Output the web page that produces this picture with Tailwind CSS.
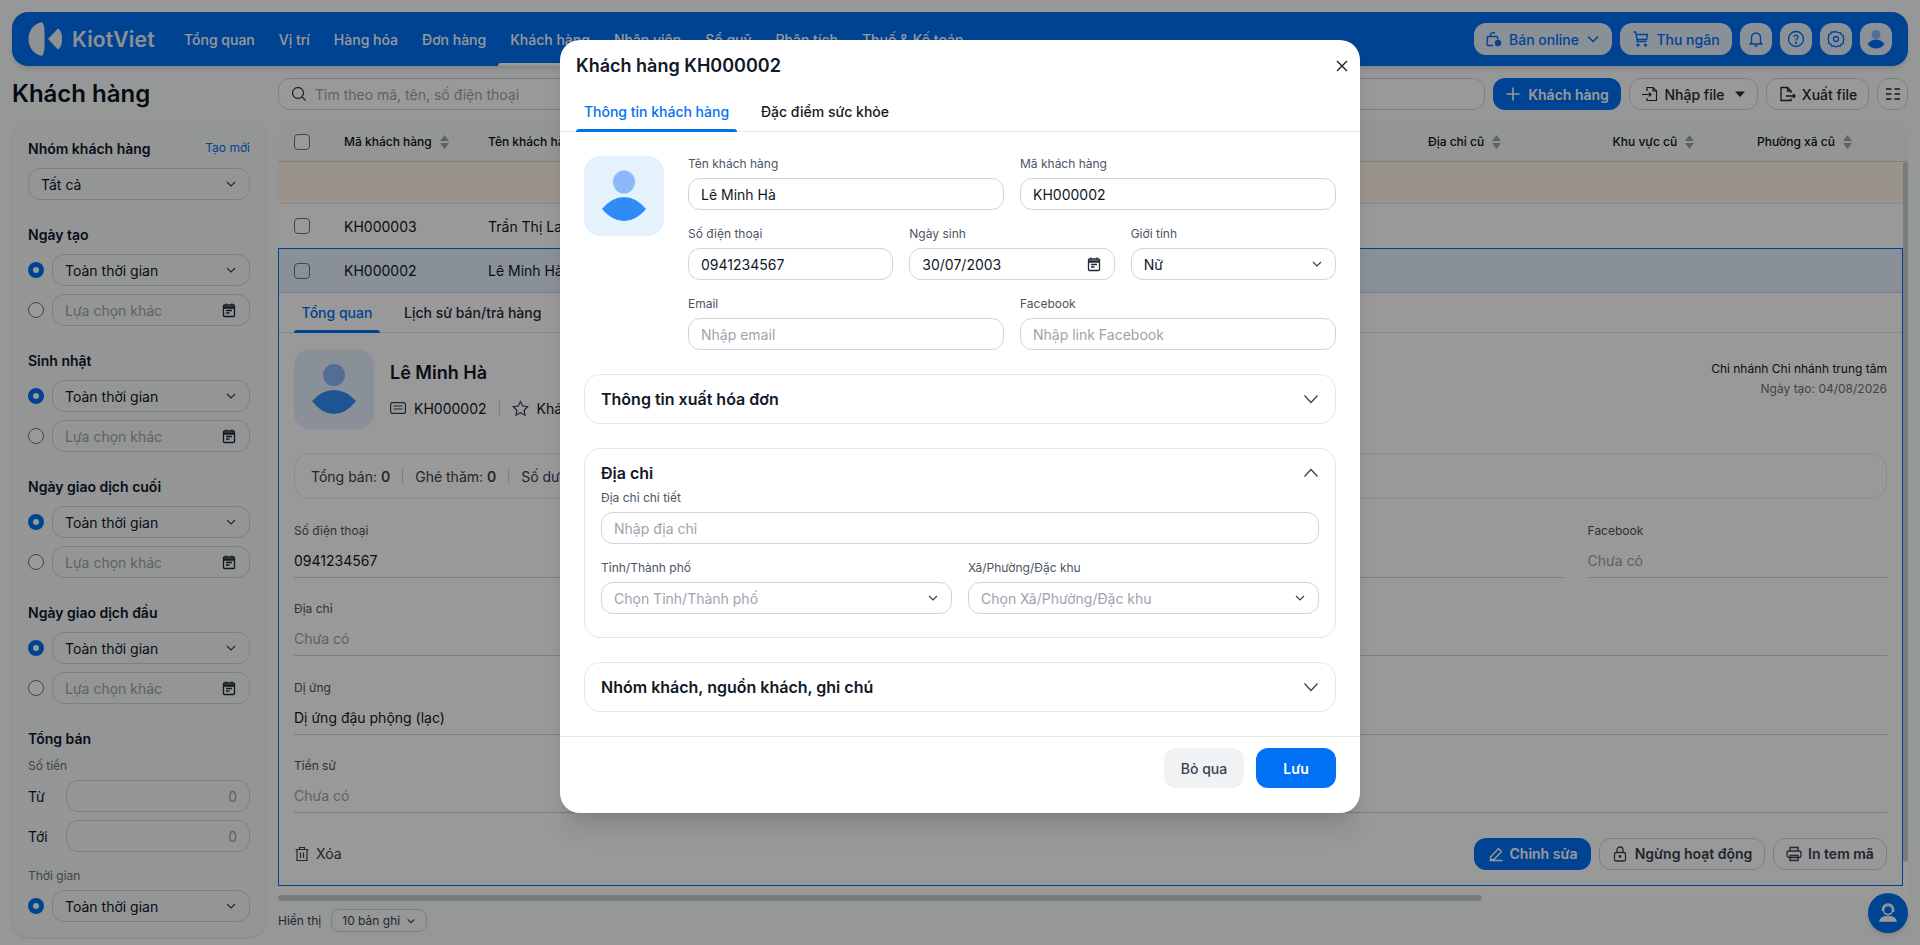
<!DOCTYPE html>
<html lang="vi">
<head>
<meta charset="utf-8">
<script src="https://cdn.jsdelivr.net/npm/@tailwindcss/browser@4"></script>
<title>Khách hàng</title>
</head>
<body class="relative w-[1920px] h-[945px] overflow-hidden bg-[#fbfdfd] font-['Inter','Noto_Sans',sans-serif] text-[14px] text-[#0f172a]">
<div class="px-3 pt-3">
  <!-- Top navigation -->
  <header class="h-[54px] rounded-2xl bg-[#0070f4] flex items-center pl-4 pr-4 shadow-md">
    <div class="flex items-center w-[144px] shrink-0">
      <svg width="36" height="34" viewBox="0 0 36 34" fill="#eef1f4"><path d="M14 0 C5 2 0.5 9 0.5 17 C0.5 25 5 32 14 34 C17 30 16.500 24 16.500 17 C16.500 10 17 4 14 0Z"/><path d="M20 17 L30 6.500 C33.500 9 34 13 34 17 C34 21 33.500 25 30 27.500Z"/></svg>
      <span class="ml-2 text-[21px] leading-none font-semibold text-[#eef1f4] font-['Inter',sans-serif] tracking-[0.2px]">KiotViet</span>
    </div>
    <nav class="flex h-full font-medium text-white">
      <a class="px-3 flex items-center">Tổng quan</a>
      <a class="px-3 flex items-center">Vị trí</a>
      <a class="px-3 flex items-center">Hàng hóa</a>
      <a class="px-3 flex items-center">Đơn hàng</a>
      <a class="px-3 flex items-center relative">Khách hàng<span class="absolute left-0 right-0 bottom-0 h-[3px] rounded-t bg-white"></span></a>
      <a class="px-3 flex items-center">Nhân viên</a>
      <a class="px-3 flex items-center">Sổ quỹ</a>
      <a class="px-3 flex items-center">Phân tích</a>
      <a class="px-3 flex items-center">Thuế &amp; Kế toán</a>
    </nav>
    <div class="ml-auto flex gap-2 text-[#0070f4] font-medium">
      <button class="h-8 w-[138px] rounded-xl bg-[#e6f1fe] flex items-center justify-center gap-[6px]">
        <svg width="18" height="18" viewBox="0 0 18 18" fill="none" stroke="currentColor" stroke-width="1.400"><path d="M8 15.500H3.500a1.500 1.500 0 0 1-1.500-1.600L2.600 6.500h9.800l.4 3"/><path d="M5.500 6.500V5a2.500 2.500 0 0 1 4.500-1.500"/><circle cx="13" cy="13" r="3.200" fill="currentColor" stroke="none"/></svg>
        Bán online
        <svg width="16" height="16" viewBox="0 0 16 16" fill="none" stroke="currentColor" stroke-width="1.500"><path d="M3 5.500l5 5 5-5"/></svg>
      </button>
      <button class="h-8 w-[112px] rounded-xl bg-[#e6f1fe] flex items-center justify-center gap-[6px]">
        <svg width="18" height="18" viewBox="0 0 18 18" fill="none" stroke="currentColor" stroke-width="1.400"><path d="M1.500 2h2.200l1.600 9.500h9"/><path d="M4 4.500h11.500l-1 5H5"/><circle cx="6" cy="15" r="0.900" fill="currentColor"/><circle cx="13.500" cy="15" r="0.900" fill="currentColor"/></svg>
        Thu ngân
      </button>
      <button class="size-8 rounded-xl bg-[#e6f1fe] flex items-center justify-center">
        <svg width="18" height="18" viewBox="0 0 18 18" fill="none" stroke="currentColor" stroke-width="1.400"><path d="M4.500 12.500V7.500a4.500 4.500 0 0 1 9 0v5l1.200 1.500H3.300z"/><path d="M7.500 16h3"/></svg>
      </button>
      <button class="size-8 rounded-xl bg-[#e6f1fe] flex items-center justify-center">
        <svg width="18" height="18" viewBox="0 0 18 18" fill="none" stroke="currentColor" stroke-width="1.300"><circle cx="9" cy="9" r="7.500"/><path d="M7 7a2 2 0 1 1 3 1.800c-.7.400-1 .8-1 1.700"/><circle cx="9" cy="12.800" r=".5" fill="currentColor"/></svg>
      </button>
      <button class="size-8 rounded-xl bg-[#e6f1fe] flex items-center justify-center">
        <svg width="18" height="18" viewBox="0 0 18 18" fill="none" stroke="currentColor" stroke-width="1.300"><path d="M9 1.500l2 1.200 2.300-.1 1.100 2 2 1.100-.1 2.300L17 9l-.7 1.700.1 2.300-2 1.100-1.100 2-2.300-.1L9 17l-2-1-2.300.1-1.100-2-2-1.100.1-2.300L1 9l.7-1.700-.1-2.300 2-1.100 1.100-2 2.300.1z"/><circle cx="9" cy="9" r="2.500"/></svg>
      </button>
      <button class="size-8 rounded-xl bg-[#e6f1fe] flex items-center justify-center">
        <svg width="24" height="24" viewBox="0 0 24 24"><circle cx="12" cy="7.500" r="4.500" fill="#8ab8fb"/><path d="M3.500 17 Q7 12.500 12 12.500 Q17 12.500 20.500 17 Q17 21.500 12 21.500 Q7 21.500 3.500 17Z" fill="#0070f4"/></svg>
      </button>
    </div>
  </header>

  <div class="mt-3 flex h-[854px]">
    <!-- Left column -->
    <div class="w-[254px] shrink-0 flex flex-col">
      <h1 class="h-8 mb-3 text-[24px] leading-8 font-semibold text-[#0b1220]">Khách hàng</h1>
      <aside class="flex-1 rounded-2xl bg-[#f7f8f9] px-4 pt-4 pb-[15px] shadow-sm">
        <div class="h-full overflow-hidden flex flex-col">
          <div class="h-5 flex items-center justify-between font-semibold"><span>Nhóm khách hàng</span><a class="text-[12px] font-normal text-[#0070f4]">Tạo mới</a></div>
          <div class="mt-[10px] h-8 rounded-xl border border-[#d1d5db] bg-[#f7f8f9] pl-3 pr-3 flex items-center justify-between">Tất cả<svg width="12" height="12" viewBox="0 0 12 12" fill="none" stroke="#374151" stroke-width="1.200"><path d="M2 4l4 4 4-4"/></svg></div>

          <div class="mt-6 h-5 flex items-center font-semibold">Ngày tạo</div>
          <div class="mt-[10px] flex items-center gap-2"><span class="size-4 shrink-0 rounded-full border-[5px] border-[#0070f4] bg-white"></span><div class="flex-1 h-8 rounded-xl border border-[#d1d5db] pl-3 pr-3 flex items-center justify-between">Toàn thời gian<svg width="12" height="12" viewBox="0 0 12 12" fill="none" stroke="#374151" stroke-width="1.200"><path d="M2 4l4 4 4-4"/></svg></div></div>
          <div class="mt-2 flex items-center gap-2"><span class="size-4 shrink-0 rounded-full border border-[#6b7280] bg-white"></span><div class="flex-1 h-8 rounded-xl border border-[#d1d5db] pl-3 pr-3 flex items-center justify-between text-[#9ca3af]">Lựa chọn khác<svg width="16" height="16" viewBox="0 0 16 16" fill="none" stroke="#1f2937" stroke-width="1.300"><rect x="2.500" y="3" width="11" height="11.500" rx="1"/><path d="M2.500 5.500h11" stroke-width="2.500"/><path d="M5 1.500v2M11 1.500v2M5 8.500h6M5 11h3.500"/></svg></div></div>

          <div class="mt-6 h-5 flex items-center font-semibold">Sinh nhật</div>
          <div class="mt-[10px] flex items-center gap-2"><span class="size-4 shrink-0 rounded-full border-[5px] border-[#0070f4] bg-white"></span><div class="flex-1 h-8 rounded-xl border border-[#d1d5db] pl-3 pr-3 flex items-center justify-between">Toàn thời gian<svg width="12" height="12" viewBox="0 0 12 12" fill="none" stroke="#374151" stroke-width="1.200"><path d="M2 4l4 4 4-4"/></svg></div></div>
          <div class="mt-2 flex items-center gap-2"><span class="size-4 shrink-0 rounded-full border border-[#6b7280] bg-white"></span><div class="flex-1 h-8 rounded-xl border border-[#d1d5db] pl-3 pr-3 flex items-center justify-between text-[#9ca3af]">Lựa chọn khác<svg width="16" height="16" viewBox="0 0 16 16" fill="none" stroke="#1f2937" stroke-width="1.300"><rect x="2.500" y="3" width="11" height="11.500" rx="1"/><path d="M2.500 5.500h11" stroke-width="2.500"/><path d="M5 1.500v2M11 1.500v2M5 8.500h6M5 11h3.500"/></svg></div></div>

          <div class="mt-6 h-5 flex items-center font-semibold">Ngày giao dịch cuối</div>
          <div class="mt-[10px] flex items-center gap-2"><span class="size-4 shrink-0 rounded-full border-[5px] border-[#0070f4] bg-white"></span><div class="flex-1 h-8 rounded-xl border border-[#d1d5db] pl-3 pr-3 flex items-center justify-between">Toàn thời gian<svg width="12" height="12" viewBox="0 0 12 12" fill="none" stroke="#374151" stroke-width="1.200"><path d="M2 4l4 4 4-4"/></svg></div></div>
          <div class="mt-2 flex items-center gap-2"><span class="size-4 shrink-0 rounded-full border border-[#6b7280] bg-white"></span><div class="flex-1 h-8 rounded-xl border border-[#d1d5db] pl-3 pr-3 flex items-center justify-between text-[#9ca3af]">Lựa chọn khác<svg width="16" height="16" viewBox="0 0 16 16" fill="none" stroke="#1f2937" stroke-width="1.300"><rect x="2.500" y="3" width="11" height="11.500" rx="1"/><path d="M2.500 5.500h11" stroke-width="2.500"/><path d="M5 1.500v2M11 1.500v2M5 8.500h6M5 11h3.500"/></svg></div></div>

          <div class="mt-6 h-5 flex items-center font-semibold">Ngày giao dịch đầu</div>
          <div class="mt-[10px] flex items-center gap-2"><span class="size-4 shrink-0 rounded-full border-[5px] border-[#0070f4] bg-white"></span><div class="flex-1 h-8 rounded-xl border border-[#d1d5db] pl-3 pr-3 flex items-center justify-between">Toàn thời gian<svg width="12" height="12" viewBox="0 0 12 12" fill="none" stroke="#374151" stroke-width="1.200"><path d="M2 4l4 4 4-4"/></svg></div></div>
          <div class="mt-2 flex items-center gap-2"><span class="size-4 shrink-0 rounded-full border border-[#6b7280] bg-white"></span><div class="flex-1 h-8 rounded-xl border border-[#d1d5db] pl-3 pr-3 flex items-center justify-between text-[#9ca3af]">Lựa chọn khác<svg width="16" height="16" viewBox="0 0 16 16" fill="none" stroke="#1f2937" stroke-width="1.300"><rect x="2.500" y="3" width="11" height="11.500" rx="1"/><path d="M2.500 5.500h11" stroke-width="2.500"/><path d="M5 1.500v2M11 1.500v2M5 8.500h6M5 11h3.500"/></svg></div></div>

          <div class="mt-6 h-5 shrink-0 flex items-center font-semibold">Tổng bán</div>
          <div class="mt-[10px] h-4 shrink-0 text-[12px] leading-4 text-[#6b7280]">Số tiền</div>
          <div class="mt-[6px] shrink-0 flex items-center"><span class="w-[38px]">Từ</span><div class="flex-1 h-8 rounded-xl border border-[#d1d5db] px-3 flex items-center justify-end text-[#9ca3af]">0</div></div>
          <div class="mt-2 shrink-0 flex items-center"><span class="w-[38px]">Tới</span><div class="flex-1 h-8 rounded-xl border border-[#d1d5db] px-3 flex items-center justify-end text-[#9ca3af]">0</div></div>
          <div class="mt-4 h-4 shrink-0 text-[12px] leading-4 text-[#6b7280]">Thời gian</div>
          <div class="mt-[6px] shrink-0 flex items-center gap-2"><span class="size-4 shrink-0 rounded-full border-[5px] border-[#0070f4] bg-white"></span><div class="flex-1 h-8 rounded-xl border border-[#d1d5db] pl-3 pr-3 flex items-center justify-between">Toàn thời gian<svg width="12" height="12" viewBox="0 0 12 12" fill="none" stroke="#374151" stroke-width="1.200"><path d="M2 4l4 4 4-4"/></svg></div></div>
        </div>
      </aside>
    </div>

    <!-- Main column -->
    <main class="ml-3 flex-1 min-w-0 flex flex-col">
      <div class="h-8 mb-3 flex gap-2">
        <div class="flex-1 rounded-xl border border-[#d1d5db] bg-white px-3 flex items-center gap-2 text-[#9ca3af]">
          <svg width="16" height="16" viewBox="0 0 16 16" fill="none" stroke="#374151" stroke-width="1.300"><circle cx="7" cy="7" r="5.500"/><path d="M11 11l3.500 3.500"/></svg>
          Tìm theo mã, tên, số điện thoại
        </div>
        <button class="w-[128px] rounded-xl bg-[#0070f4] text-white font-semibold flex items-center justify-center gap-[7px]"><svg width="16" height="16" viewBox="0 0 16 16" fill="none" stroke="currentColor" stroke-width="1.600"><path d="M8 1.500v13M1.500 8h13"/></svg>Khách hàng</button>
        <button class="w-[129px] rounded-xl border border-[#d1d5db] bg-white font-medium text-[#1f2937] flex items-center justify-center gap-[6px]"><svg width="18" height="18" viewBox="0 0 18 18" fill="none" stroke="currentColor" stroke-width="1.200"><path d="M6 6V2.500h6l3.500 3.500v9.500H6V13"/><path d="M12 2.500V6h3.500"/><path d="M1 9.500h9M8 7.500l2 2-2 2"/></svg>Nhập file<svg class="ml-1" width="12" height="12" viewBox="0 0 12 12" fill="currentColor"><path d="M1 3.500h10L6 9z"/></svg></button>
        <button class="w-[103px] rounded-xl border border-[#d1d5db] bg-white font-medium text-[#1f2937] flex items-center justify-center gap-[6px]"><svg width="18" height="18" viewBox="0 0 18 18" fill="none" stroke="currentColor" stroke-width="1.300"><path d="M13 8V6L9.500 2.500H3v13h10v-2"/><path d="M9.500 2.500V6H13"/><path d="M8 11h9M15 9l2 2-2 2"/></svg>Xuất file</button>
        <button class="w-[31px] rounded-xl border border-[#d1d5db] bg-white flex items-center justify-center"><svg width="16" height="16" viewBox="0 0 16 16" fill="none" stroke="#1f2937" stroke-width="1.500"><path d="M1 3h5.500M9.500 3H15M1 8h5.500M9.500 8H15M1 13h5.500M9.500 13H15"/></svg></button>
      </div>

      <section class="relative h-[779px] rounded-t-2xl overflow-hidden bg-white">
        <div class="h-10 bg-[#f7f8f9] border-b border-[#d1d5db] grid grid-cols-[66px_144px_940px_184.500px_144.500px_1fr] items-center text-[12px] font-medium text-[#0b1220]">
          <span class="pl-4"><span class="block size-4 rounded-[4px] border border-[#6b7280] bg-white"></span></span>
          <span class="flex items-center gap-2">Mã khách hàng<svg width="9" height="14" viewBox="0 0 9 14" fill="#9ca3af"><path d="M4.500 0L9 6H0zM0 8h9l-4.500 6z"/></svg></span>
          <span>Tên khách hàng</span>
          <span class="flex items-center gap-2">Địa chỉ cũ<svg width="9" height="14" viewBox="0 0 9 14" fill="#9ca3af"><path d="M4.500 0L9 6H0zM0 8h9l-4.500 6z"/></svg></span>
          <span class="flex items-center gap-2">Khu vực cũ<svg width="9" height="14" viewBox="0 0 9 14" fill="#9ca3af"><path d="M4.500 0L9 6H0zM0 8h9l-4.500 6z"/></svg></span>
          <span class="flex items-center gap-2">Phường xã cũ<svg width="9" height="14" viewBox="0 0 9 14" fill="#9ca3af"><path d="M4.500 0L9 6H0zM0 8h9l-4.500 6z"/></svg></span>
        </div>
        <div class="h-[42px] bg-[#fff6ea] border-b border-[#e5e7eb]"></div>
        <div class="h-11 flex items-center">
          <span class="pl-4 w-[66px]"><span class="block size-4 rounded-[4px] border border-[#6b7280] bg-white"></span></span>
          <span class="w-[144px]">KH000003</span><span>Trần Thị Lan</span>
        </div>
        <!-- Expanded row -->
        <div class="w-[1625px] h-[638px] border border-[#0070f4] flex flex-col">
          <div class="h-[44px] shrink-0 bg-[#e6f1fe] border-b border-[#d1d5db] flex items-center">
            <span class="pl-[15px] w-[65px]"><span class="block size-4 rounded-[4px] border border-[#6b7280] bg-white/0"></span></span>
            <span class="w-[144px]">KH000002</span><span>Lê Minh Hà</span>
          </div>
          <div class="h-10 shrink-0 mx-0 border-b border-[#e5e7eb] flex px-[15px]">
            <span class="relative w-[86px] flex items-center justify-center text-[#0070f4] font-medium">Tổng quan<span class="absolute left-0 right-0 -bottom-px h-[3px] rounded-t bg-[#0070f4]"></span></span>
            <span class="ml-6 flex items-center font-medium text-[#1f2937]">Lịch sử bán/trả hàng</span>
          </div>
          <div class="px-[15px] pt-4 flex flex-col flex-1">
            <div class="flex h-20">
              <div class="size-20 rounded-2xl bg-[#e6f1fe] flex items-center justify-center"><svg width="80" height="80" viewBox="0 0 80 80"><circle cx="40" cy="26" r="11" fill="#8ab8fb"/><path d="M18 52 Q28 41 40 41 Q52 41 62 52 Q52 65 40 65 Q28 65 18 52Z" fill="#2f8cf7"/></svg></div>
              <div class="ml-4 flex flex-col">
                <div class="mt-[12px] h-6 text-[18px] leading-6 font-semibold">Lê Minh Hà</div>
                <div class="mt-[13px] h-5 flex items-center"><svg width="16" height="16" viewBox="0 0 16 16" fill="none" stroke="#374151" stroke-width="1.200"><rect x="0.600" y="2.600" width="14.800" height="10.800" rx="2"/><path d="M3.500 6h9M3.500 9h9"/></svg><span class="ml-2">KH000002</span><span class="ml-3 w-px h-4 bg-[#d1d5db]"></span><svg class="ml-3" width="17" height="17" viewBox="0 0 17 17" fill="none" stroke="#374151" stroke-width="1.200"><path d="M8.500 1.500l2.200 4.500 5 .7-3.600 3.500.9 5-4.500-2.400-4.500 2.400.9-5L1.300 6.700l5-.7z"/></svg><span class="ml-2">Khách lẻ</span></div>
              </div>
              <div class="ml-auto pt-[10px] text-right text-[12px] leading-5"><div>Chi nhánh Chi nhánh trung tâm</div><div class="text-[#6b7280]">Ngày tạo: 04/08/2026</div></div>
            </div>
            <div class="mt-6 h-[46px] rounded-2xl border border-[#e5e7eb] px-4 flex items-center text-[#374151]">
              <span>Tổng bán: <b class="font-semibold">0</b></span><span class="mx-3 w-px h-4 bg-[#d1d5db]"></span>
              <span>Ghé thăm: <b class="font-semibold">0</b></span><span class="mx-3 w-px h-4 bg-[#d1d5db]"></span>
              <span>Số dư: <b class="font-semibold">0</b></span>
            </div>
            <div class="mt-[24px] grid grid-cols-5 gap-x-6 gap-y-[23.300px]">
              <div class="h-[55px] border-b border-[#d1d5db]"><div class="text-[12px] leading-4 text-[#4b5563]">Số điện thoại</div><div class="mt-3 leading-5">0941234567</div></div>
              <div class="h-[55px] border-b border-[#d1d5db]"></div>
              <div class="h-[55px] border-b border-[#d1d5db]"></div>
              <div class="h-[55px] border-b border-[#d1d5db]"></div>
              <div class="h-[55px] border-b border-[#d1d5db]"><div class="text-[12px] leading-4 text-[#4b5563]">Facebook</div><div class="mt-3 leading-5 text-[#9ca3af]">Chưa có</div></div>
              <div class="col-span-5 h-[55px] border-b border-[#d1d5db]"><div class="text-[12px] leading-4 text-[#4b5563]">Địa chỉ</div><div class="mt-3 leading-5 text-[#9ca3af]">Chưa có</div></div>
              <div class="col-span-5 h-[55px] border-b border-[#d1d5db]"><div class="text-[12px] leading-4 text-[#4b5563]">Dị ứng</div><div class="mt-3 leading-5">Dị ứng đậu phộng (lạc)</div></div>
              <div class="col-span-5 h-[55px] border-b border-[#d1d5db]"><div class="text-[12px] leading-4 text-[#4b5563]">Tiền sử</div><div class="mt-3 leading-5 text-[#9ca3af]">Chưa có</div></div>
            </div>
            <div class="mt-[25px] flex items-center font-semibold">
              <span class="flex items-center gap-[6px] font-normal text-[#374151]"><svg width="16" height="16" viewBox="0 0 16 16" fill="none" stroke="currentColor" stroke-width="1.200"><path d="M1.500 3.500h13M5.500 3.500V1.500h5v2M3 3.500v11h10v-11M6.500 6.500v5.500M9.500 6.500v5.500"/></svg>Xóa</span>
              <button class="ml-auto h-8 w-[117px] rounded-xl bg-[#0070f4] text-white flex items-center justify-center gap-[6px]"><svg width="16" height="16" viewBox="0 0 16 16" fill="none" stroke="currentColor" stroke-width="1.300"><path d="M1.500 14.500h13M2.500 11L10.500 2.500l3 3-7.500 8H2.500z"/></svg>Chỉnh sửa</button>
              <button class="ml-2 h-8 w-[166px] rounded-xl border border-[#d1d5db] text-[#374151] flex items-center justify-center gap-[7px]"><svg width="16" height="16" viewBox="0 0 16 16" fill="none" stroke="currentColor" stroke-width="1.300"><rect x="2.500" y="6.500" width="11" height="8.500" rx="1.500"/><path d="M5 6.500V4a3 3 0 0 1 6 0v2.500"/><circle cx="8" cy="10.500" r=".8" fill="currentColor"/></svg>Ngừng hoạt động</button>
              <button class="ml-2 h-8 w-[114px] rounded-xl border border-[#d1d5db] text-[#374151] flex items-center justify-center gap-[6px]"><svg width="16" height="16" viewBox="0 0 16 16" fill="none" stroke="currentColor" stroke-width="1.300"><path d="M4 5V1.500h8V5"/><rect x="1" y="5" width="14" height="6.500" rx="2"/><path d="M4 9.500h8v5H4z"/></svg>In tem mã</button>
            </div>
          </div>
        </div>
        <!-- scrollbars -->
        <span class="absolute right-0 top-10 bottom-[39px] w-[5px] rounded-full bg-[#c9ced5]"></span>
        <span class="absolute left-0 bottom-0 w-[1204px] h-[6px] rounded-full bg-[#c9ced5]"></span>
      </section>

      <div class="mt-2 h-[23px] flex items-center text-[12px] text-[#374151]">Hiển thị
        <span class="ml-[10px] w-[96px] h-[23px] rounded-lg border border-[#d1d5db] flex items-center justify-center gap-[6px]">10 bản ghi<svg width="10" height="10" viewBox="0 0 12 12" fill="none" stroke="#374151" stroke-width="1.300"><path d="M2 4l4 4 4-4"/></svg></span>
      </div>
    </main>
  </div>
</div>

<!-- Floating help -->
<div class="absolute left-[1868px] top-[893px] size-10 rounded-full bg-[#0070f4] flex items-center justify-center shadow-md">
  <svg width="24" height="24" viewBox="0 0 24 24" fill="none" stroke="#fff" stroke-width="1.500"><circle cx="12" cy="9" r="4.500"/><path d="M6.500 10V8.500a5.500 5.500 0 0 1 11 0V11"/><path d="M4 20c1-3.500 4-4.500 8-4.500s7 1 8 4.500z" fill="#fff"/></svg>
</div>

<!-- Overlay + modal -->
<div class="absolute inset-0 bg-black/40 flex justify-center pt-10">
  <div class="w-[800px] h-[773px] rounded-[20px] bg-white flex flex-col shadow-xl text-[#111827]">
    <div class="h-[52px] shrink-0 px-4 flex items-center justify-between pt-[0px]">
      <h2 class="text-[18px] leading-[52px] font-semibold mt-[0px]">Khách hàng KH000002</h2>
      <svg class="mr-[-4px]" width="12" height="12" viewBox="0 0 12 12" fill="none" stroke="#111827" stroke-width="1.300"><path d="M1 1l10 10M11 1L1 11"/></svg>
    </div>
    <div class="h-[40px] shrink-0 border-b border-[#e5e7eb] px-4 flex">
      <span class="relative w-[161px] flex items-center justify-center font-medium text-[#0070f4]">Thông tin khách hàng<span class="absolute left-0 right-0 -bottom-px h-[3px] rounded-t bg-[#0070f4]"></span></span>
      <span class="ml-6 flex items-center font-medium">Đặc điểm sức khỏe</span>
    </div>
    <div class="flex-1 min-h-0 px-6 pt-6 flex flex-col">
      <div class="flex">
        <div class="size-20 shrink-0 rounded-2xl bg-[#e6f1fe]"><svg width="80" height="80" viewBox="0 0 80 80"><ellipse cx="40" cy="26" rx="11" ry="11.500" fill="#8ab8fb"/><path d="M18 53 Q28 41 40 41 Q52 41 62 53 Q52 65 40 65 Q28 65 18 53Z" fill="#2f8cf7"/></svg></div>
        <div class="ml-6 flex-1 flex flex-col gap-4">
          <div class="grid grid-cols-2 gap-x-4">
            <label class="block"><span class="block text-[12px] leading-4 text-[#4b5563]">Tên khách hàng</span><span class="mt-[6px] h-8 rounded-xl border border-[#d1d5db] px-3 flex items-center">Lê Minh Hà</span></label>
            <label class="block"><span class="block text-[12px] leading-4 text-[#4b5563]">Mã khách hàng</span><span class="mt-[6px] h-8 rounded-xl border border-[#d1d5db] px-3 flex items-center">KH000002</span></label>
          </div>
          <div class="grid grid-cols-3 gap-x-4">
            <label class="block"><span class="block text-[12px] leading-4 text-[#4b5563]">Số điện thoại</span><span class="mt-[6px] h-8 rounded-xl border border-[#d1d5db] px-3 flex items-center">0941234567</span></label>
            <label class="block"><span class="block text-[12px] leading-4 text-[#4b5563]">Ngày sinh</span><span class="mt-[6px] h-8 rounded-xl border border-[#d1d5db] px-3 flex items-center justify-between">30/07/2003<svg width="16" height="16" viewBox="0 0 16 16" fill="none" stroke="#1f2937" stroke-width="1.300"><rect x="2.500" y="3" width="11" height="11.500" rx="1"/><path d="M2.500 5.500h11" stroke-width="2.500"/><path d="M5 1.500v2M11 1.500v2M5 8.500h6M5 11h3.500"/></svg></span></label>
            <label class="block"><span class="block text-[12px] leading-4 text-[#4b5563]">Giới tính</span><span class="mt-[6px] h-8 rounded-xl border border-[#d1d5db] px-3 flex items-center justify-between">Nữ<svg width="12" height="12" viewBox="0 0 12 12" fill="none" stroke="#374151" stroke-width="1.200"><path d="M2 4l4 4 4-4"/></svg></span></label>
          </div>
          <div class="grid grid-cols-2 gap-x-4">
            <label class="block"><span class="block text-[12px] leading-4 text-[#4b5563]">Email</span><span class="mt-[6px] h-8 rounded-xl border border-[#d1d5db] px-3 flex items-center text-[#9ca3af]">Nhập email</span></label>
            <label class="block"><span class="block text-[12px] leading-4 text-[#4b5563]">Facebook</span><span class="mt-[6px] h-8 rounded-xl border border-[#d1d5db] px-3 flex items-center text-[#9ca3af]">Nhập link Facebook</span></label>
          </div>
        </div>
      </div>

      <div class="mt-6 h-[50px] shrink-0 rounded-2xl border border-[#e5e7eb] px-4 flex items-center justify-between text-[16px] font-semibold">Thông tin xuất hóa đơn<svg width="16" height="16" viewBox="0 0 16 16" fill="none" stroke="#374151" stroke-width="1.300"><path d="M1.500 4.500L8 11.500l6.500-7"/></svg></div>

      <div class="mt-6 h-[190px] shrink-0 rounded-2xl border border-[#e5e7eb] px-4 pt-[14px]">
        <div class="h-5 flex items-center justify-between text-[16px] font-semibold">Địa chỉ<svg width="16" height="16" viewBox="0 0 16 16" fill="none" stroke="#374151" stroke-width="1.300"><path d="M1.500 11.500L8 4.500l6.500 7"/></svg></div>
        <label class="mt-[7px] block"><span class="block text-[12px] leading-4 text-[#4b5563]">Địa chỉ chi tiết</span><span class="mt-[6px] h-8 rounded-xl border border-[#d1d5db] px-3 flex items-center text-[#9ca3af]">Nhập địa chỉ</span></label>
        <div class="mt-4 grid grid-cols-2 gap-x-4">
          <label class="block"><span class="block text-[12px] leading-4 text-[#4b5563]">Tỉnh/Thành phố</span><span class="mt-[6px] h-8 rounded-xl border border-[#d1d5db] px-3 flex items-center justify-between text-[#9ca3af]">Chọn Tỉnh/Thành phố<svg width="12" height="12" viewBox="0 0 12 12" fill="none" stroke="#374151" stroke-width="1.200"><path d="M2 4l4 4 4-4"/></svg></span></label>
          <label class="block"><span class="block text-[12px] leading-4 text-[#4b5563]">Xã/Phường/Đặc khu</span><span class="mt-[6px] h-8 rounded-xl border border-[#d1d5db] px-3 flex items-center justify-between text-[#9ca3af]">Chọn Xã/Phường/Đặc khu<svg width="12" height="12" viewBox="0 0 12 12" fill="none" stroke="#374151" stroke-width="1.200"><path d="M2 4l4 4 4-4"/></svg></span></label>
        </div>
      </div>

      <div class="mt-6 h-[50px] shrink-0 rounded-2xl border border-[#e5e7eb] px-4 flex items-center justify-between text-[16px] font-semibold">Nhóm khách, nguồn khách, ghi chú<svg width="16" height="16" viewBox="0 0 16 16" fill="none" stroke="#374151" stroke-width="1.300"><path d="M1.500 4.500L8 11.500l6.500-7"/></svg></div>
    </div>
    <div class="h-[77px] shrink-0 border-t border-[#e5e7eb] px-6 pt-[11px] flex justify-end gap-3">
      <button class="w-20 h-10 rounded-xl bg-[#f0f2f4] font-medium text-[#374151]">Bỏ qua</button>
      <button class="w-20 h-10 rounded-xl bg-[#0070f4] font-semibold text-white">Lưu</button>
    </div>
  </div>
</div>
</body>
</html>
